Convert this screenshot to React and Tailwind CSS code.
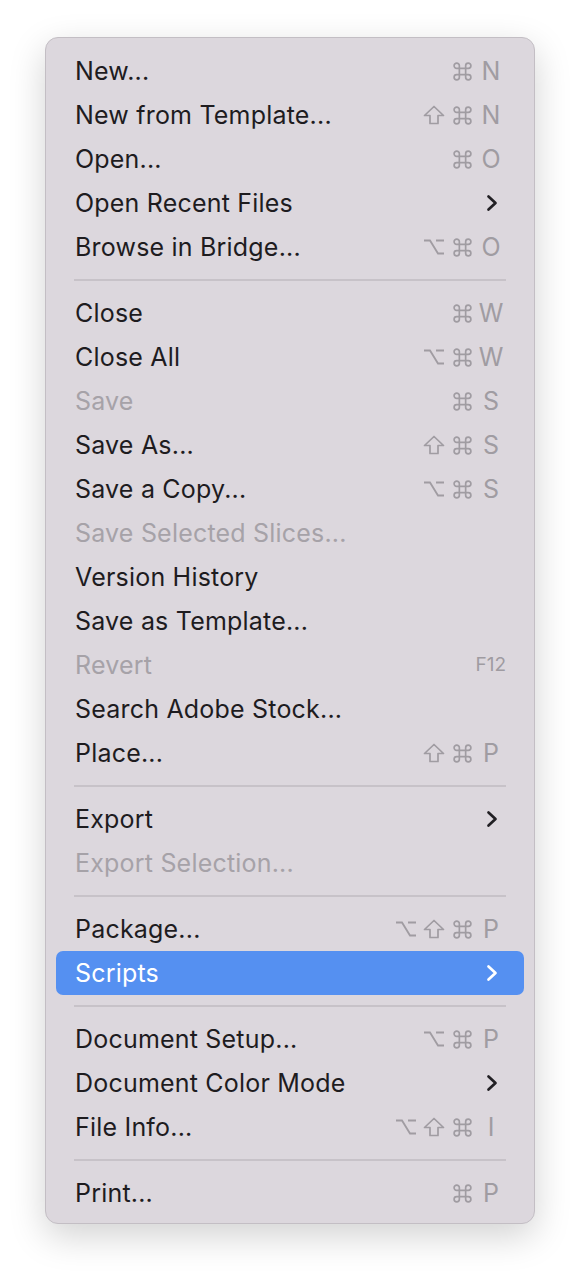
import React from 'react';

const CmdIcon = () => (
  <svg width="21" height="21" viewBox="0 0 20 20" fill="none" stroke="currentColor" strokeWidth="1.6">
    <path d="M7 7H4.5A2.5 2.5 0 1 1 7 4.5V15.5A2.5 2.5 0 1 1 4.5 13H15.5A2.5 2.5 0 1 1 13 15.5V4.5A2.5 2.5 0 1 1 15.5 7Z" />
  </svg>
);

const ShiftIcon = () => (
  <svg width="22" height="20" viewBox="0 0 22 20" fill="none" stroke="currentColor" strokeWidth="1.7" strokeLinejoin="round">
    <path d="M11 1.5L20.5 10.5H15V18.5H7V10.5H1.5Z" />
  </svg>
);

const OptIcon = () => (
  <svg width="22" height="18" viewBox="0 0 22 18" fill="none" stroke="currentColor" strokeWidth="1.8">
    <path d="M1 2.5H7L15 15.5H21M13 2.5H21" />
  </svg>
);

const Chevron = () => (
  <svg width="12" height="18" viewBox="0 0 12 18" fill="none" stroke="currentColor" strokeWidth="2.7" strokeLinecap="round" strokeLinejoin="round">
    <path d="M2.5 2.5L9.5 9L2.5 15.5" />
  </svg>
);

const MOD = { opt: OptIcon, shift: ShiftIcon, cmd: CmdIcon };

const MENU = [
  { label: 'New...', mods: ['cmd'], key: 'N' },
  { label: 'New from Template...', mods: ['shift', 'cmd'], key: 'N' },
  { label: 'Open...', mods: ['cmd'], key: 'O' },
  { label: 'Open Recent Files', sub: true },
  { label: 'Browse in Bridge...', mods: ['opt', 'cmd'], key: 'O' },
  'sep',
  { label: 'Close', mods: ['cmd'], key: 'W' },
  { label: 'Close All', mods: ['opt', 'cmd'], key: 'W' },
  { label: 'Save', mods: ['cmd'], key: 'S', disabled: true },
  { label: 'Save As...', mods: ['shift', 'cmd'], key: 'S' },
  { label: 'Save a Copy...', mods: ['opt', 'cmd'], key: 'S' },
  { label: 'Save Selected Slices...', disabled: true },
  { label: 'Version History' },
  { label: 'Save as Template...' },
  { label: 'Revert', fkey: 'F12', disabled: true },
  { label: 'Search Adobe Stock...' },
  { label: 'Place...', mods: ['shift', 'cmd'], key: 'P' },
  'sep',
  { label: 'Export', sub: true },
  { label: 'Export Selection...', disabled: true },
  'sep',
  { label: 'Package...', mods: ['opt', 'shift', 'cmd'], key: 'P' },
  { label: 'Scripts', sub: true, active: true },
  'sep',
  { label: 'Document Setup...', mods: ['opt', 'cmd'], key: 'P' },
  { label: 'Document Color Mode', sub: true },
  { label: 'File Info...', mods: ['opt', 'shift', 'cmd'], key: 'I' },
  'sep',
  { label: 'Print...', mods: ['cmd'], key: 'P' },
];

const Row = ({ item }) => {
  const textColor = item.active ? 'text-white' : item.disabled ? 'text-[#a6a2a8]' : 'text-[#1e1c1f]';
  return (
    <div className={`h-[44px] flex items-center justify-between pl-[19px] pr-[18px] rounded-[7px] ${item.active ? 'bg-[#5590f1]' : ''}`}>
      <span className={`text-[25px] leading-none tracking-[0.2px] ${textColor}`}>{item.label}</span>
      {item.sub && (
        <span className={`mr-[8px] ${item.active ? 'text-white' : 'text-[#222024]'}`}>
          <Chevron />
        </span>
      )}
      {item.fkey && <span className="text-[19px] text-[#9f9ba1]">{item.fkey}</span>}
      {item.key && (
        <span className="flex items-center text-[#a09ca2]">
          {item.mods.map((m) => {
            const Icon = MOD[m];
            return (
              <span key={m} className="w-[28px] flex justify-center">
                <Icon />
              </span>
            );
          })}
          <span className="w-[30px] text-center text-[25px] leading-none">{item.key}</span>
        </span>
      )}
    </div>
  );
};

export default function App() {
  return (
    <div className="min-h-[1278px] bg-white pt-[37px] pl-[45px]" style={{ fontFamily: 'Inter, "Liberation Sans", sans-serif' }}>
      <div className="w-[490px] bg-[#dcd7dd] border border-[#c3bec4] rounded-[13px] px-[10px] pt-[11px] pb-[8px] shadow-[0_12px_36px_rgba(0,0,0,0.18)]">
        {MENU.map((item, i) =>
          item === 'sep' ? (
            <div key={i} className="h-[22px] flex items-center mx-[18px]">
              <div className="w-full h-[2px] bg-[#c7c2c8]" />
            </div>
          ) : (
            <Row key={i} item={item} />
          )
        )}
      </div>
    </div>
  );
}
